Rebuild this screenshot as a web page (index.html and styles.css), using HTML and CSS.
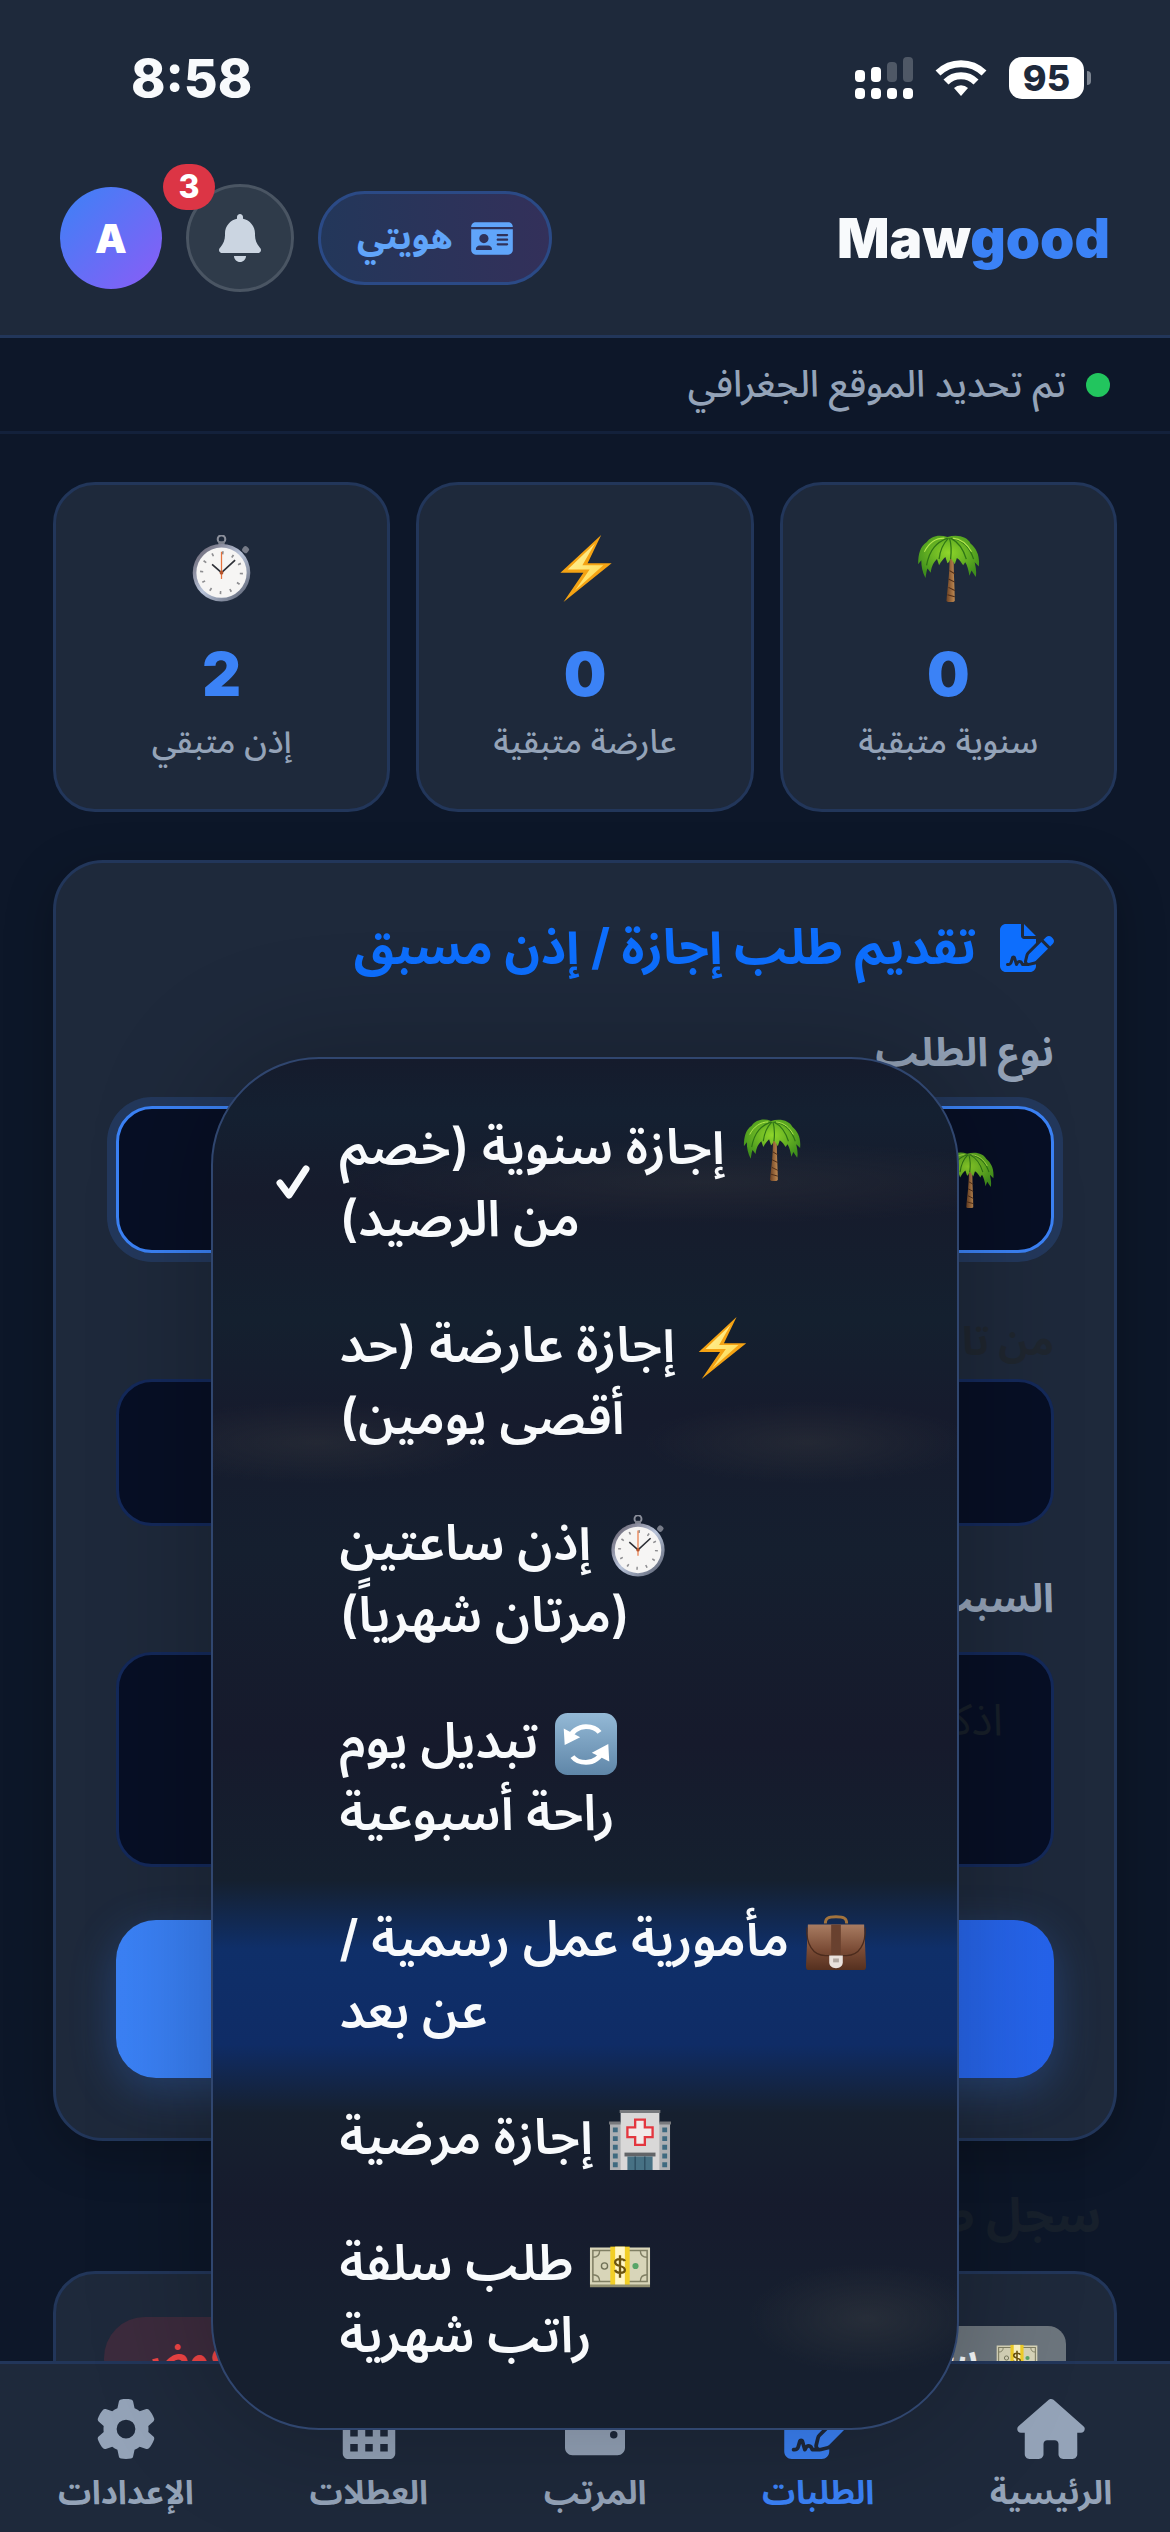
FILE: index.html
```
<!DOCTYPE html>
<html lang="ar" dir="rtl">
<head>
    <meta charset="UTF-8">
    <meta name="viewport" content="width=device-width, initial-scale=1.0">
    <title>Mawgood</title>
    <link rel="stylesheet" href="styles.css">
</head>
<body>
    <!-- icon sprite -->
    <svg class="sprite" aria-hidden="true">
        <defs>
            <linearGradient id="gBolt" x1="0" y1="0" x2="1" y2="1">
                <stop offset="0" stop-color="#fff3a0"/>
                <stop offset="1" stop-color="#ffd84a"/>
            </linearGradient>
            <linearGradient id="gTrunk" x1="0" y1="0" x2="1" y2="0">
                <stop offset="0" stop-color="#6b4023"/>
                <stop offset="1" stop-color="#c08a52"/>
            </linearGradient>
            <radialGradient id="gLeaf" cx=".5" cy=".4" r=".6">
                <stop offset="0" stop-color="#8fd62a"/>
                <stop offset="1" stop-color="#3f8f1c"/>
            </radialGradient>
            <linearGradient id="gRim" x1="0" y1="0" x2="1" y2="1">
                <stop offset="0" stop-color="#5a5360"/>
                <stop offset=".5" stop-color="#b9c4da"/>
                <stop offset="1" stop-color="#4f5565"/>
            </linearGradient>
            <linearGradient id="gBlue" x1="0" y1="0" x2="0" y2="1">
                <stop offset="0" stop-color="#94b9d6"/>
                <stop offset="1" stop-color="#5f86a8"/>
            </linearGradient>
            <linearGradient id="gBag" x1="0" y1="0" x2="0" y2="1">
                <stop offset="0" stop-color="#a87c62"/>
                <stop offset=".55" stop-color="#7b4c36"/>
                <stop offset="1" stop-color="#55301f"/>
            </linearGradient>
        </defs>
        <symbol id="e-palm" viewBox="0 0 64 64">
            <path d="M33 22c3 0 4 2 4 6 0 10 1 23 1 35-2 2-6 2-8 0 1-12 3-24 3-41z" fill="url(#gTrunk)"/>
            <path d="M33 34l5 3M32 42l6 3M32 50l6 3M31 57l7 2" stroke="#4e2c17" stroke-width="1"/>
            <path d="M31 2C23-1 15 1 11 7 5 11 3 18 3 28l3-4c0 6 1 11 4 17 1-5 1-7 2-9l3 4c1-7 3-10 6-13l2 6c2-4 4-6 6-8l2 6c1 0 2-2 3-5l4 6 2-6c3 2 4 4 6 7l2-3c2 3 3 7 4 13l2-5 4 6c1-5 0-9-1-14l4 4c1-10-2-17-8-22C50 2 41-1 31 2z" fill="url(#gLeaf)"/>
            <path d="M31 3C21 7 14 13 11 29M32 3c-5 5-8 11-9 20M33 3c2 7 2 12 1 20M34 3c8 4 12 10 15 20M35 3c11 2 17 8 21 20" fill="none" stroke="#2f7516" stroke-width="1.2"/>
            <path d="M28 3c-8 0-15 5-19 13M36 3c9 1 14 6 18 13" fill="none" stroke="#b4e84e" stroke-width="1"/>
        </symbol>
        <symbol id="e-bolt" viewBox="0 0 64 64">
            <path d="M47 0L8 36h22L11 64l46-37H34z" fill="#f5a313"/>
            <path d="M41 8L15 33h21L22 53l27-24H29z" fill="url(#gBolt)"/>
        </symbol>
        <symbol id="e-watch" viewBox="0 0 64 64">
            <circle cx="32" cy="4" r="3.600" fill="none" stroke="#8b8f9b" stroke-width="2"/>
            <rect x="29" y="6" width="6" height="5" fill="#7d818d"/>
            <rect x="52" y="11" width="6" height="6" rx="2" fill="#767b88" transform="rotate(40 55 14)"/>
            <circle cx="32" cy="36" r="27.500" fill="url(#gRim)"/>
            <circle cx="32" cy="36" r="24" fill="#f6f5f4"/>
            <circle cx="32" cy="36" r="19" fill="none" stroke="#8d8d90" stroke-width="3" stroke-dasharray="1.600 8.340"/>
            <path d="M32 36l13-12M32 36l-9-8" stroke="#2d2f36" stroke-width="1.600"/>
            <path d="M32 42V16" stroke="#e8733d" stroke-width="1.200"/>
            <circle cx="32" cy="36" r="1.800" fill="#b5532b"/>
        </symbol>
        <symbol id="e-refresh" viewBox="0 0 64 64">
            <rect x="0" y="0" width="64" height="64" rx="13" fill="url(#gBlue)"/>
            <path d="M14 27c3-8 10-13 18-13 6 0 11 2 14 6M50 38c-3 8-10 13-18 13-6 0-11-2-14-6" fill="none" stroke="#fff" stroke-width="5"/>
            <path d="M9 16l1 17 16-8zM56 50l-1-18-17 9z" fill="#fff"/>
        </symbol>
        <symbol id="e-bag" viewBox="0 0 64 64">
            <path d="M21 13c0-5 2-7 11-7s11 2 11 7" fill="none" stroke="#a2733d" stroke-width="3"/>
            <path d="M3 14h58l2 43c0 3-1 4-3 4H4c-2 0-3-1-3-4z" fill="url(#gBag)"/>
            <path d="M2 17c-1 17 6 29 19 29h22c13 0 20-12 19-29" fill="none" stroke="#4b2b1d" stroke-width="1.300"/>
            <rect x="27" y="14" width="10" height="32" fill="#69412f"/>
            <path d="M25 46h14v7c0 4-3 6-7 6s-7-2-7-6z" fill="#e9e2dd"/>
            <rect x="29" y="49" width="6" height="4" fill="#b1a8a1"/>
        </symbol>
        <symbol id="e-hospital" viewBox="0 0 64 64">
            <path d="M1 14h62v49H1z" fill="#aeb0b3"/>
            <path d="M12 2h40v61H12z" fill="#d9d8d8"/>
            <path d="M11 1h42v3H11zM0 13h12v3H0zM52 13h12v3H52z" fill="#77797d"/>
            <path d="M4 19h5v5H4zM4 28h5v5H4zM4 37h5v5H4zM4 46h5v5H4zM4 55h5v5H4zM55 19h5v5h-5zM55 28h5v5h-5zM55 37h5v5h-5zM55 46h5v5h-5zM55 55h5v5h-5z" fill="#3f6a80"/>
            <path d="M27 11h10v8h8v10h-8v8H27v-8h-8V19h8z" fill="#f1eaea" stroke="#e3363f" stroke-width="2.400"/>
            <path d="M16 45h32v4H16z" fill="#626569"/>
            <path d="M19 49h26v14H19z" fill="#477184"/>
            <path d="M27 49v14M37 49v14" stroke="#28475a" stroke-width="1.200"/>
        </symbol>
        <symbol id="e-money" viewBox="0 0 64 64">
            <path d="M1 13h62v38l-1 2H2l-1-2z" fill="#d8d5b9"/>
            <path d="M4 16h56v32H4z" fill="none" stroke="#807f64" stroke-width="1.600"/>
            <path d="M4 23c5 0 7-3 7-7M60 23c-5 0-7-3-7-7M4 41c5 0 7 3 7 7M60 41c-5 0-7 3-7 7" fill="none" stroke="#807f64" stroke-width="1.400"/>
            <circle cx="16" cy="32" r="3.200" fill="none" stroke="#6f7057" stroke-width="1.400"/>
            <circle cx="48" cy="32" r="3.200" fill="#58a568"/>
            <path d="M22 12h20v41H22z" fill="#f2cf27"/>
            <path d="M27 12h10v41H27z" fill="#fff6c4"/>
            <path d="M37 27c-1-3-10-3-10 1 0 5 10 3 10 8 0 4-9 4-10 0M32 21v23" fill="none" stroke="#6b5410" stroke-width="2.400"/>
            <path d="M1 51h62v3H1z" fill="#8f8d70"/>
        </symbol>
        <symbol id="i-sign" viewBox="0 0 576 512">
            <path d="M64 0C28.7 0 0 28.7 0 64V448c0 35.3 28.7 64 64 64H320c35.3 0 64-28.7 64-64V428.7c-2.7 1.1-5.4 2-8.2 2.7l-60.1 15c-3 .7-6 1.2-9 1.4c-.9 .1-1.8 .2-2.7 .2H240c-6.1 0-11.6-3.4-14.3-8.8l-8.8-17.7c-1.7-3.4-5.1-5.5-8.8-5.5s-7.2 2.1-8.8 5.5l-8.8 17.7c-2.9 5.9-9.2 9.4-15.7 8.8s-12.1-5.1-13.9-11.3L144 381l-9.8 32.8c-6.1 20.3-24.8 34.2-46 34.2H80c-8.8 0-16-7.2-16-16s7.2-16 16-16h8.2c7.1 0 13.3-4.6 15.3-11.4l14.9-49.5c3.4-11.3 13.8-19.1 25.6-19.1s22.2 7.7 25.6 19.1l11.6 38.6c7.4-6.2 16.8-9.7 26.8-9.7c15.9 0 30.4 9 37.5 23.2l4.4 8.8h8.9c-3.1-8.8-3.7-18.4-1.4-27.8l15-60.1c2.8-11.3 8.6-21.5 16.8-29.7L384 203.6V160H256c-17.7 0-32-14.3-32-32V0H64zM256 0V128H384L256 0zM549.8 139.7c-15.6-15.6-40.9-15.6-56.6 0l-29.4 29.4 71 71 29.4-29.4c15.6-15.6 15.6-40.9 0-56.6l-14.4-14.4zM311.9 321c-4.1 4.1-7 9.2-8.4 14.9l-15 60.1c-1.4 5.5 .2 11.2 4.2 15.2s9.7 5.6 15.2 4.2l60.1-15c5.6-1.4 10.8-4.3 14.9-8.4L512.1 262.7l-71-71L311.9 321z"/>
        </symbol>
    </svg>

    <div class="app">
        <header class="header">
            <div class="status-bar" dir="ltr">
                <span class="time">8:58</span>
                <div class="status-icons">
                    <svg width="58" height="42" viewBox="0 0 58 42" fill="#fff">
                        <rect x="0" y="13" width="10" height="12" rx="4"/>
                        <rect x="16" y="10" width="10" height="15" rx="4"/>
                        <rect x="32" y="5" width="10" height="20" rx="4" opacity=".22"/>
                        <rect x="48" y="0" width="10" height="25" rx="4" opacity=".22"/>
                        <rect x="0" y="31" width="10" height="11" rx="4"/>
                        <rect x="16" y="31" width="10" height="11" rx="4"/>
                        <rect x="32" y="31" width="10" height="11" rx="4"/>
                        <rect x="48" y="31" width="10" height="11" rx="4"/>
                    </svg>
                    <svg width="52" height="38" viewBox="0 0 52 38" fill="none" stroke="#fff" stroke-width="7">
                        <path d="M3 14a33 33 0 0 1 46 0"/>
                        <path d="M11 23a21 21 0 0 1 30 0"/>
                        <path d="M26 37l-7-8a10 10 0 0 1 14 0z" fill="#fff" stroke="none"/>
                    </svg>
                    <span class="battery">95</span>
                </div>
            </div>
            <div class="top-bar">
                <div class="logo" dir="ltr">Maw<span>good</span></div>
                <div class="actions">
                    <button class="id-btn" type="button">
                        <svg width="42" height="37" viewBox="0 0 576 512" fill="currentColor"><path d="M0 96l576 0c0-35.3-28.7-64-64-64H64C28.7 32 0 60.7 0 96zm0 32V416c0 35.3 28.7 64 64 64H512c35.3 0 64-28.7 64-64V128H0zM64 405.3c0-29.5 23.9-53.3 53.3-53.3H234.7c29.5 0 53.3 23.9 53.3 53.3c0 5.9-4.8 10.7-10.7 10.7H74.7c-5.9 0-10.7-4.8-10.7-10.7zM176 192a64 64 0 1 1 0 128 64 64 0 1 1 0-128zm176 16c0-8.8 7.2-16 16-16H496c8.8 0 16 7.2 16 16s-7.2 16-16 16H368c-8.8 0-16-7.2-16-16zm0 64c0-8.8 7.2-16 16-16H496c8.8 0 16 7.2 16 16s-7.2 16-16 16H368c-8.8 0-16-7.2-16-16zm0 64c0-8.8 7.2-16 16-16H496c8.8 0 16 7.2 16 16s-7.2 16-16 16H368c-8.8 0-16-7.2-16-16z"/></svg>
                        هويتي
                    </button>
                    <button class="bell-btn" type="button" aria-label="الإشعارات">
                        <svg width="42" height="48" viewBox="0 0 448 512" fill="currentColor"><path d="M224 0c-17.700 0-32 14.300-32 32V51.200C119 66 64 130.600 64 208v18.800c0 47-17.300 92.400-48.500 127.600l-7.400 8.300c-8.400 9.400-10.400 22.900-5.300 34.400S19.400 416 32 416H416c12.600 0 24-7.400 29.200-18.900s3.100-25-5.300-34.400l-7.400-8.300C401.300 319.200 384 273.900 384 226.800V208c0-77.400-55-142-128-156.800V32c0-17.700-14.300-32-32-32zm45.300 493.300c12-12 18.700-28.300 18.700-45.300H224 160c0 17 6.700 33.300 18.700 45.300s28.300 18.700 45.300 18.700s33.300-6.700 45.300-18.700z"/></svg>
                        <span class="badge">3</span>
                    </button>
                    <button class="avatar" type="button">A</button>
                </div>
            </div>
        </header>

        <div class="location">
            <span class="dot"></span>
            تم تحديد الموقع الجغرافي
        </div>

        <main class="content">
            <section class="stats">
                <div class="stat">
                    <svg class="stat-icon"><use href="#e-palm"/></svg>
                    <div class="stat-value">0</div>
                    <div class="stat-label">سنوية متبقية</div>
                </div>
                <div class="stat">
                    <svg class="stat-icon"><use href="#e-bolt"/></svg>
                    <div class="stat-value">0</div>
                    <div class="stat-label">عارضة متبقية</div>
                </div>
                <div class="stat">
                    <svg class="stat-icon"><use href="#e-watch"/></svg>
                    <div class="stat-value">2</div>
                    <div class="stat-label">إذن متبقي</div>
                </div>
            </section>

            <form class="card">
                <h2 class="card-title">
                    <svg width="54" height="48" fill="currentColor"><use href="#i-sign"/></svg>
                    تقديم طلب إجازة / إذن مسبق
                </h2>

                <label class="label" for="type">نوع الطلب</label>
                <div class="field select-field">
                    <svg class="emoji"><use href="#e-palm"/></svg>
                    <select id="type">
                        <option>إجازة سنوية (خصم من الرصيد)</option>
                        <option>إجازة عارضة (حد أقصى يومين)</option>
                        <option>إذن ساعتين (مرتان شهرياً)</option>
                        <option>تبديل يوم راحة أسبوعية</option>
                        <option>مأمورية عمل رسمية / عن بعد</option>
                        <option>إجازة مرضية</option>
                        <option>طلب سلفة راتب شهرية</option>
                    </select>
                </div>

                <div class="dates">
                    <div>
                        <label class="label" for="from">من تاريخ</label>
                        <input class="field date" type="date" id="from" value="2025-01-15">
                    </div>
                    <div>
                        <label class="label" for="to">إلى</label>
                        <input class="field date" type="date" id="to" value="2025-01-15">
                    </div>
                </div>

                <label class="label" for="reason">السبب</label>
                <textarea class="field" id="reason" placeholder="اذكر السبب"></textarea>

                <button class="submit" type="button">إرسال الطلب</button>
            </form>

            <h3 class="history-title">سجل طلباتي</h3>
            <div class="history-card">
                <span class="tag tag-type"><svg class="tag-icon"><use href="#e-money"/></svg>سلفة</span>
                <span class="tag tag-rejected">مرفوض</span>
            </div>
        </main>

        <nav class="nav">
            <a href="#">
                <svg width="68" height="60" viewBox="0 0 576 512" fill="currentColor"><path d="M575.8 255.5c0 18-15 32.1-32 32.1h-32l.7 160.200c0 2.700-.2 5.400-.5 8.100V472c0 22.100-17.900 40-40 40H456c-1.100 0-2.200 0-3.300-.1c-1.400 .1-2.800 .1-4.200 .1H416 392c-22.100 0-40-17.900-40-40V448 384c0-17.700-14.300-32-32-32H256c-17.700 0-32 14.300-32 32v64 24c0 22.100-17.900 40-40 40H160 128.100c-1.500 0-3-.1-4.500-.2c-1.200 .1-2.400 .2-3.600 .2H104c-22.100 0-40-17.900-40-40V360c0-.9 0-1.900 .1-2.800V287.600H32c-18 0-32-14-32-32.100c0-9 3-17 10-24L266.400 8c7-7 15-8 22-8s15 2 21 7L564.800 231.500c8 7 12 15 11 24z"/></svg>
                الرئيسية
            </a>
            <a href="#" class="active">
                <svg width="68" height="60" fill="currentColor"><use href="#i-sign"/></svg>
                الطلبات
            </a>
            <a href="#">
                <svg width="60" height="60" viewBox="0 0 512 512" fill="currentColor"><path d="M64 32C28.700 32 0 60.700 0 96V416c0 35.300 28.700 64 64 64H448c35.300 0 64-28.700 64-64V192c0-35.300-28.700-64-64-64H80c-8.800 0-16-7.200-16-16s7.200-16 16-16H448c17.700 0 32-14.300 32-32s-14.300-32-32-32H64zM416 272a32 32 0 1 1 0 64 32 32 0 1 1 0-64z"/></svg>
                المرتب
            </a>
            <a href="#">
                <svg width="54" height="60" viewBox="0 0 448 512" fill="currentColor"><path fill-rule="evenodd" d="M96 0h64v64h128V0h64v64h48c26 0 48 22 48 48v48H0v-48c0-26 22-48 48-48h48zM0 192h448v272c0 26-22 48-48 48H48c-26 0-48-22-48-48zM64 256h64v64H64zM192 256h64v64h-64zM320 256h64v64h-64zM64 384h64v64H64zM192 384h64v64h-64zM320 384h64v64h-64z"/></svg>
                العطلات
            </a>
            <a href="#">
                <svg width="60" height="60" viewBox="0 0 512 512" fill="currentColor"><path d="M495.9 166.600c3.200 8.700 .5 18.400-6.400 24.600l-43.300 39.400c1.100 8.300 1.700 16.800 1.700 25.400s-.6 17.100-1.700 25.400l43.300 39.400c6.900 6.200 9.600 15.900 6.400 24.600c-4.400 11.900-9.700 23.300-15.800 34.300l-4.700 8.100c-6.600 11-14 21.400-22.100 31.200c-5.900 7.200-15.700 9.600-24.500 6.800l-55.700-17.700c-13.400 10.300-28.200 18.900-44 25.400l-12.500 57.100c-2 9.100-9 16.300-18.200 17.800c-13.800 2.300-28 3.500-42.500 3.500s-28.700-1.200-42.500-3.500c-9.200-1.500-16.200-8.700-18.200-17.800l-12.500-57.100c-15.800-6.500-30.600-15.100-44-25.400L83.100 425.900c-8.800 2.800-18.600 .3-24.500-6.800c-8.100-9.800-15.500-20.200-22.100-31.200l-4.700-8.100c-6.100-11-11.400-22.400-15.800-34.300c-3.200-8.700-.5-18.400 6.400-24.600l43.300-39.400C64.600 273.100 64 264.600 64 256s.6-17.100 1.700-25.400L22.400 191.200c-6.900-6.200-9.600-15.900-6.400-24.600c4.400-11.900 9.700-23.300 15.800-34.300l4.700-8.100c6.600-11 14-21.400 22.100-31.200c5.900-7.200 15.700-9.600 24.500-6.800l55.700 17.700c13.400-10.300 28.200-18.900 44-25.400l12.500-57.100c2-9.100 9-16.300 18.200-17.800C227.300 1.200 241.500 0 256 0s28.700 1.200 42.500 3.500c9.200 1.500 16.200 8.700 18.200 17.800l12.500 57.100c15.800 6.500 30.600 15.100 44 25.400l55.700-17.700c8.800-2.800 18.600-.3 24.500 6.800c8.100 9.800 15.500 20.200 22.100 31.200l4.700 8.100c6.100 11 11.400 22.400 15.800 34.300zM256 336a80 80 0 1 0 0-160 80 80 0 1 0 0 160z"/></svg>
                الإعدادات
            </a>
        </nav>

        <!-- open drop-down of the request type -->
        <div class="menu" role="listbox" aria-label="نوع الطلب">
            <button type="button" role="option" aria-selected="true">
                <svg class="check" viewBox="0 0 34 34"><path d="M4 18l9 12L30 4"/></svg>
                <span><svg class="emoji"><use href="#e-palm"/></svg>إجازة سنوية (خصم<br>من الرصيد)</span>
            </button>
            <button type="button" role="option">
                <span><svg class="emoji"><use href="#e-bolt"/></svg>إجازة عارضة (حد<br>أقصى يومين)</span>
            </button>
            <button type="button" role="option">
                <span><svg class="emoji"><use href="#e-watch"/></svg>إذن ساعتين<br>(مرتان شهرياً)</span>
            </button>
            <button type="button" role="option">
                <span><svg class="emoji"><use href="#e-refresh"/></svg>تبديل يوم<br>راحة أسبوعية</span>
            </button>
            <button type="button" role="option">
                <span><svg class="emoji"><use href="#e-bag"/></svg>مأمورية عمل رسمية /<br>عن بعد</span>
            </button>
            <button type="button" role="option">
                <span><svg class="emoji"><use href="#e-hospital"/></svg>إجازة مرضية</span>
            </button>
            <button type="button" role="option">
                <span><svg class="emoji"><use href="#e-money"/></svg>طلب سلفة<br>راتب شهرية</span>
            </button>
        </div>
    </div>
</body>
</html>
```
FILE: styles.css
```
* {
    box-sizing: border-box;
}

body {
    margin: 0;
    background-color: #0d1729;
    color: #f8fafc;
    font-family: Inter, "Noto Sans Arabic", "DejaVu Sans", sans-serif;
}

button,
input,
select,
textarea {
    font-family: inherit;
    color: inherit;
}

button {
    cursor: pointer;
}

.sprite {
    position: absolute;
    width: 0;
    height: 0;
}

.app {
    position: relative;
    display: flex;
    flex-direction: column;
    height: 100vh;
    overflow: hidden;
}

/* header */
.header {
    flex: none;
    background-color: #1e293b;
    border-bottom: 3px solid #22365a;
}

.status-bar {
    display: flex;
    justify-content: space-between;
    align-items: center;
    height: 156px;
    padding: 0 79px 0 131px;
}

.time {
    font-size: 52px;
    font-weight: 800;
}

.status-icons {
    display: flex;
    align-items: center;
    gap: 22px;
}

.battery {
    position: relative;
    width: 75px;
    height: 42px;
    margin-right: 7px;
    border-radius: 13px;
    background-color: #fff;
    color: #1e293b;
    font-size: 36px;
    line-height: 42px;
    font-weight: 800;
    text-align: center;
}

.battery::after {
    content: "";
    position: absolute;
    right: -7px;
    top: 14px;
    width: 4px;
    height: 14px;
    border-radius: 0 4px 4px 0;
    background-color: #7d8591;
}

.top-bar {
    display: flex;
    justify-content: space-between;
    align-items: center;
    height: 179px;
    padding: 0 60px 15px;
}

.logo {
    font-size: 55px;
    font-weight: 900;
}

.logo span {
    color: #3b82f6;
}

.actions {
    display: flex;
    align-items: center;
    gap: 24px;
}

.id-btn {
    display: flex;
    align-items: center;
    gap: 18px;
    height: 94px;
    padding: 0 36px;
    border: 3px solid #2b4a86;
    border-radius: 47px;
    background: linear-gradient(to right, #23375a, #33305a);
    color: #60a5fa;
    font-size: 35px;
    font-weight: 700;
}

.bell-btn {
    position: relative;
    display: flex;
    align-items: center;
    justify-content: center;
    width: 108px;
    height: 108px;
    border: 3px solid #4a5563;
    border-radius: 50%;
    background-color: #2f3b4a;
    color: #cbd5e1;
}

.badge {
    position: absolute;
    top: -23px;
    left: -26px;
    width: 52px;
    height: 46px;
    border-radius: 23px;
    background-color: #dc3545;
    color: #fff;
    font-size: 32px;
    line-height: 46px;
    font-weight: 800;
}

.avatar {
    width: 102px;
    height: 102px;
    border: none;
    border-radius: 50%;
    background: linear-gradient(135deg, #3b82f6, #8b5cf6);
    color: #fff;
    font-size: 40px;
    font-weight: 900;
}

.location {
    flex: none;
    display: flex;
    align-items: center;
    gap: 20px;
    height: 96px;
    padding: 0 60px;
    border-bottom: 3px solid #13213b;
    color: #94a3b8;
    font-size: 37px;
    font-weight: 500;
}

.dot {
    width: 24px;
    height: 24px;
    border-radius: 50%;
    background-color: #22c55e;
}

/* content */
.content {
    flex: 1;
    min-height: 0;
    overflow: hidden;
    padding: 48px 53px 0;
}

.stats {
    display: grid;
    grid-template-columns: repeat(3, 1fr);
    gap: 26px;
    margin-bottom: 48px;
}

.stat {
    display: flex;
    flex-direction: column;
    align-items: center;
    height: 330px;
    padding-top: 50px;
    border: 3px solid #22365a;
    border-radius: 42px;
    background-color: #1e293b;
}

.stat-icon {
    width: 67px;
    height: 67px;
    margin-bottom: 38px;
}

.stat-value {
    color: #3b82f6;
    font-size: 60px;
    line-height: 68px;
    font-weight: 900;
}

.stat-label {
    margin-top: 6px;
    color: #94a3b8;
    font-size: 33px;
    line-height: 54px;
    font-weight: 500;
}

.card {
    padding: 57px 60px 60px;
    border: 3px solid #22365a;
    border-radius: 50px;
    background-color: #1e293b;
    box-shadow: 0 12px 48px rgba(0, 0, 0, 0.25);
}

.card-title {
    display: flex;
    align-items: center;
    gap: 24px;
    height: 56px;
    margin: 0 0 48px;
    color: #0d6efd;
    font-size: 49px;
    font-weight: 700;
}

.label {
    display: block;
    height: 56px;
    margin-bottom: 26px;
    color: #94a3b8;
    font-size: 40px;
    line-height: 56px;
    font-weight: 700;
}

.field {
    display: block;
    width: 100%;
    height: 147px;
    border: 3px solid #14295a;
    border-radius: 36px;
    background-color: #070f25;
    font-size: 44px;
}

.select-field {
    display: flex;
    align-items: center;
    gap: 24px;
    padding: 0 55px;
    border-color: #3b82f6;
    box-shadow: 0 0 0 9px rgba(59, 130, 246, 0.18);
}

.select-field select {
    flex: 1;
    min-width: 0;
    border: none;
    outline: none;
    appearance: none;
    background: none;
    font-size: 44px;
}

.dates {
    display: grid;
    grid-template-columns: minmax(0, 1fr) minmax(0, 1fr);
    gap: 36px;
    margin: 60px 0 44px;
}

.dates .label {
    margin-bottom: 10px;
    color: #1f262f;
}

.date {
    padding: 0 90px;
}

.date::-webkit-calendar-picker-indicator {
    display: none;
}

textarea.field {
    height: 215px;
    padding: 20px 48px;
    resize: none;
}

textarea::placeholder {
    color: #171f29;
}

.submit {
    display: block;
    width: 100%;
    height: 158px;
    margin-top: 53px;
    border: none;
    border-radius: 40px;
    background: linear-gradient(to right, #3b82f6, #2563eb);
    box-shadow: 0 12px 45px rgba(59, 130, 246, 0.3);
    color: #fff;
    font-size: 48px;
    font-weight: 700;
}

.history-title {
    height: 60px;
    margin: 44px 16px 26px;
    color: #17202c;
    font-size: 48px;
    line-height: 60px;
}

.history-card {
    display: flex;
    justify-content: space-between;
    align-items: flex-start;
    height: 300px;
    padding: 43px 48px;
    border: 3px solid #22365a;
    border-radius: 42px;
    background-color: #1e293b;
}

.tag {
    display: flex;
    align-items: center;
    gap: 18px;
    padding: 0 28px;
    font-size: 36px;
    font-weight: 700;
}

.tag-type {
    height: 64px;
    margin-top: 9px;
    border-radius: 18px;
    background-color: #6c757d;
}

.tag-rejected {
    height: 82px;
    border-radius: 41px;
    background-color: #3c2b3d;
    color: #ef4444;
    font-size: 40px;
}

.tag-icon {
    width: 42px;
    height: 42px;
}

/* bottom navigation */
.nav {
    flex: none;
    display: flex;
    justify-content: space-around;
    height: 171px;
    padding-top: 35px;
    border-top: 3px solid #22365a;
    background-color: #1e293b;
}

.nav a {
    display: flex;
    flex-direction: column;
    align-items: center;
    gap: 8px;
    color: #94a3b8;
    font-size: 33px;
    line-height: 50px;
    font-weight: 700;
    text-decoration: none;
}

.nav a.active {
    color: #3b82f6;
}

.menu {
    position: absolute;
    top: 1057px;
    left: 18%;
    width: 64%;
    padding: 24px 0 31px;
    border: 2px solid #30466f;
    border-radius: 108px;
    background:
        radial-gradient(ellipse 22% 3% at 80% 28%, rgba(60, 62, 64, 0.35), transparent),
        radial-gradient(ellipse 24% 3% at 14% 28%, rgba(60, 62, 64, 0.35), transparent),
        radial-gradient(ellipse 50% 3% at 66% 9%, rgba(60, 62, 64, 0.3), transparent),
        radial-gradient(ellipse 16% 4% at 88% 92%, rgba(70, 72, 74, 0.35), transparent),
        linear-gradient(#151b2c 0%, #142031 4%, #161b2c 10%, #14202f 19%, #161b2d 26%, #151f2f 36%, #161a2c 50%, #15202f 60%, #0f2f69 65%, #0f2c66 72%, #16202f 77%, #161b2d 84%, #161f2f 92%, #161f2f 100%);
    box-shadow: 0 0 120px rgba(0, 0, 0, 0.25);
    direction: ltr;
}

.menu button {
    display: grid;
    grid-template-columns: 34px 1fr;
    align-items: center;
    gap: 30px;
    width: 100%;
    padding: 27px 36px 27px 63px;
    border: none;
    background: none;
    font-size: 50px;
    line-height: 72px;
    font-weight: 600;
}

.menu span {
    grid-column: 2;
    direction: rtl;
    text-align: left;
}

.emoji {
    flex: none;
    width: 56px;
    height: 56px;
    vertical-align: middle;
}

.menu .emoji {
    width: 62px;
    height: 62px;
    margin-left: 16px;
}

.check {
    width: 34px;
    height: 34px;
    fill: none;
    stroke: #f8fafc;
    stroke-width: 7;
    stroke-linecap: round;
    stroke-linejoin: round;
}
```
